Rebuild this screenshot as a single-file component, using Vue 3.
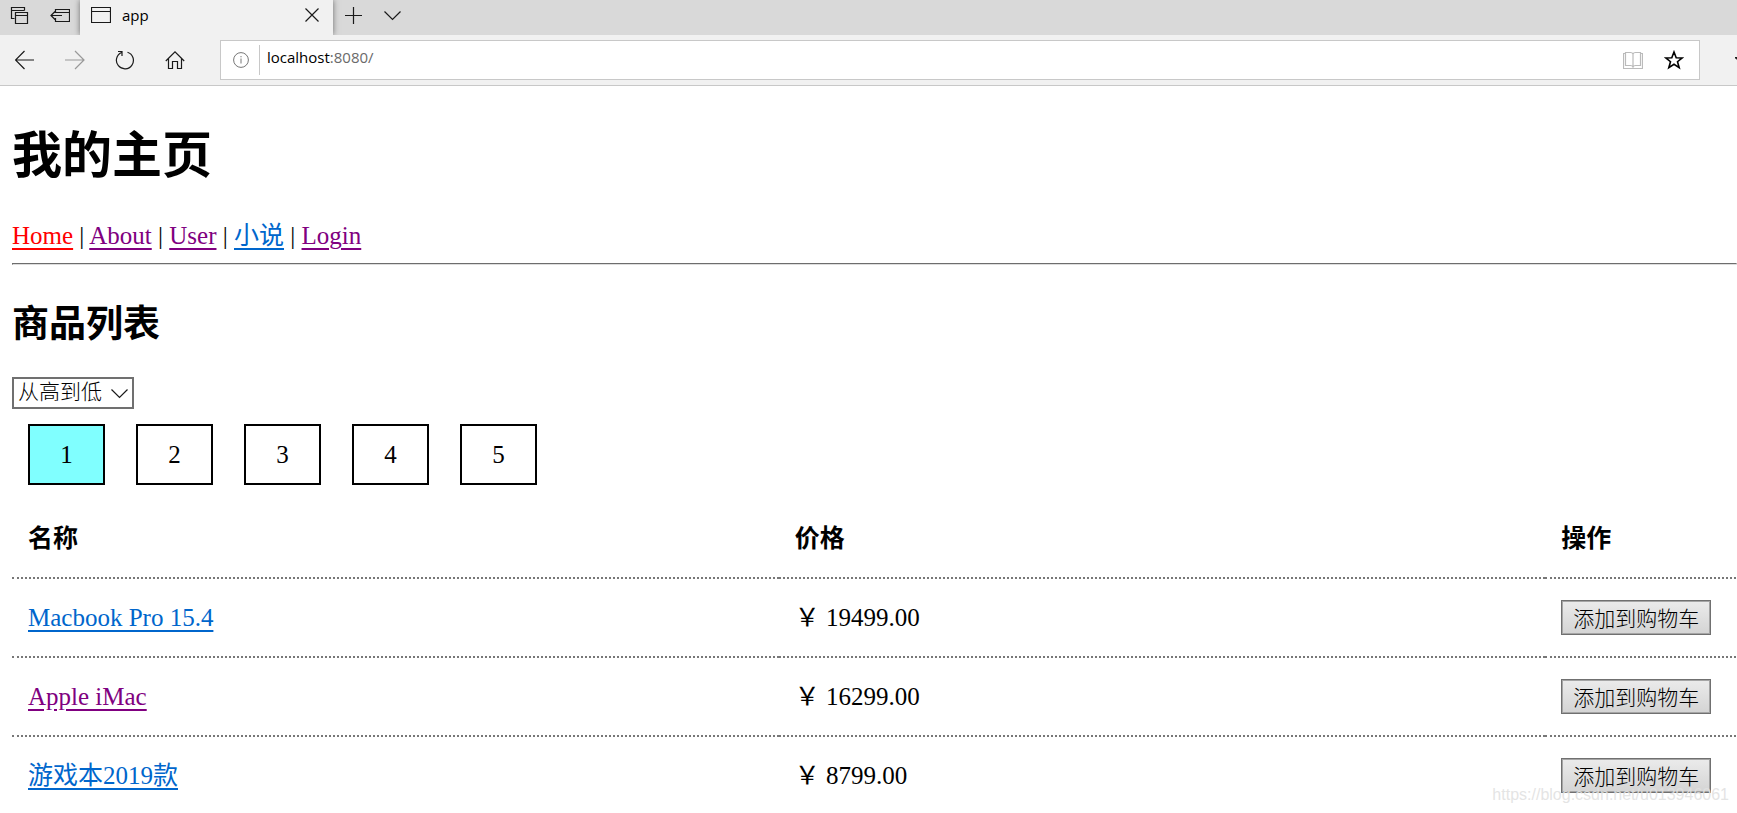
<template>
  <div class="window">
    <header class="tab-strip">
      <button class="strip-btn" type="button" aria-label="Tabs set aside">
        <svg width="20" height="20" viewBox="0 0 20 20">
          <path d="M4.5 12.5h-3v-11h13v3M1.5 4.5h13M5.5 6.5h12v11h-12zM5.5 9.5h12" />
        </svg>
      </button>
      <button class="strip-btn aside-btn" type="button" aria-label="Set tabs aside">
        <svg width="20" height="20" viewBox="0 0 20 20">
          <path d="M5.5 7V3.5h14v12h-14V12M5.5 6.5h14M1 9.5h11M5 5.5l-4 4 4 4" />
        </svg>
      </button>
      <div class="tab">
        <svg width="20" height="18" viewBox="0 0 20 18">
          <path d="M.5 1.5h19v15H.5zM.5 5.5h19" />
        </svg>
        <span class="tab-title">app</span>
        <button type="button" aria-label="Close tab">
          <svg width="14" height="14" viewBox="0 0 14 14"><path d="M.5.5l13 13M13.5.5l-13 13" /></svg>
        </button>
      </div>
      <button class="strip-btn plus-btn" type="button" aria-label="New tab">
        <svg width="17" height="17" viewBox="0 0 17 17"><path d="M0 8.5h17M8.5 0v17" /></svg>
      </button>
      <button class="strip-btn" type="button" aria-label="Tab previews">
        <svg width="17" height="10" viewBox="0 0 17 10"><path d="M.5.5l8 8 8-8" /></svg>
      </button>
    </header>

    <div class="toolbar">
      <button type="button" aria-label="Back">
        <svg width="20" height="20" viewBox="0 0 20 20"><path d="M.7 10H19M9.5 1l-9 9 9 9" /></svg>
      </button>
      <button class="disabled" type="button" aria-label="Forward" disabled>
        <svg width="20" height="20" viewBox="0 0 20 20"><path d="M0 10h19M10 1l9 9-9 9" /></svg>
      </button>
      <button type="button" aria-label="Refresh">
        <svg width="20" height="20" viewBox="0 0 20 20">
          <path d="M12.5 2.2A8.5 8.5 0 1 1 6.5 2.5M3 1.5h4v4.5" />
        </svg>
      </button>
      <button type="button" aria-label="Home">
        <svg width="20" height="20" viewBox="0 0 20 20">
          <path d="M.8 11L10 1.8 19.2 11M3.5 8.5v10h4v-7h5v7h4v-10" />
        </svg>
      </button>
      <div class="address">
        <svg class="info" width="16" height="16" viewBox="0 0 16 16">
          <circle cx="8" cy="8" r="7.4" />
          <path d="M8 6.5v5M8 4v1.3" />
        </svg>
        <div class="url"><b>localhost</b>:8080/</div>
        <button class="book" type="button" aria-label="Reading view">
          <svg width="20" height="19" viewBox="0 0 20 19">
            <path d="M2.5 2.5h-2v15h19v-15h-2M2.5 1.5h5q2 0 2.5 1.5.5-1.5 2.5-1.5h5v13h-5q-2 0-2.5 1.5-.5-1.5-2.5-1.5h-5zM10 3v13" />
          </svg>
        </button>
        <button type="button" aria-label="Add to favorites">
          <svg width="20" height="20" viewBox="0 0 20 20">
            <path class="star" d="M10 2l2.2 5.7 6 .2-4.7 3.800 1.700 6L10 14.300l-5.200 3.400 1.700-6L1.800 7.900l6-.2z" />
          </svg>
        </button>
      </div>
      <svg class="hub" width="20" height="20" viewBox="0 0 20 20">
        <path d="M0 7.5h7L10 1l3 6.5h7M0 7.5l5 4" />
      </svg>
    </div>

    <main class="page">
      <h1>我的主页</h1>
      <nav>
        <template v-for="(link, i) in links" :key="link.text">
          <span v-if="i > 0"> | </span>
          <a :href="link.href" :class="link.state">{{ link.text }}</a>
        </template>
      </nav>
      <hr />
      <h2>商品列表</h2>
      <div class="sort">
        <select v-model="order" aria-label="价格排序">
          <option value="desc">从高到低</option>
        </select>
        <svg width="17" height="10" viewBox="0 0 17 10"><path d="M.5.5l8 8 8-8" /></svg>
      </div>
      <div class="pager">
        <button
          v-for="n in 5"
          :key="n"
          type="button"
          :class="{ active: n === current }"
          @click="current = n"
        >{{ n }}</button>
      </div>
      <table>
        <thead>
          <tr>
            <th>名称</th>
            <th>价格</th>
            <th>操作</th>
          </tr>
        </thead>
        <tbody>
          <tr v-for="item in products" :key="item.id">
            <td><a :href="'/detail/' + item.id" :class="{ visited: item.visited }">{{ item.name }}</a></td>
            <td>￥ {{ item.price.toFixed(2) }}</td>
            <td><button class="cart" type="button">添加到购物车</button></td>
          </tr>
        </tbody>
      </table>
    </main>
    <div class="watermark">https://blog.csdn.net/u013946061</div>
  </div>
</template>

<script setup>
import { ref } from 'vue'

const order = ref('desc')
const current = ref(1)

const links = [
  { text: 'Home', href: '/', state: 'current' },
  { text: 'About', href: '/about', state: 'visited' },
  { text: 'User', href: '/user', state: 'visited' },
  { text: '小说', href: '/novel', state: '' },
  { text: 'Login', href: '/login', state: 'visited' }
]

const products = [
  { id: 1, name: 'Macbook Pro 15.4', price: 19499, visited: false },
  { id: 2, name: 'Apple iMac', price: 16299, visited: true },
  { id: 3, name: '游戏本2019款', price: 8799, visited: false }
]
</script>

<style>
body {
  margin: 0;
  background: #fff;
}
</style>

<style scoped>
.window {
  position: relative;
  height: 100vh;
  overflow: hidden;
  color: #000;
  font-family: 'Liberation Serif', 'Noto Sans CJK SC', serif;
  font-size: 25px;
}

button {
  font: inherit;
  color: inherit;
  padding: 0;
  border: 0;
  background: none;
}

svg {
  display: block;
  flex: none;
  fill: none;
  stroke: #1a1a1a;
  stroke-width: 1.2;
}

/* browser frame */
.tab-strip {
  display: flex;
  align-items: center;
  height: 35px;
  padding-left: 10px;
  background: #d9d9d9;
  font-family: 'Open Sans', 'Noto Sans CJK SC', sans-serif;
  font-size: 15px;
}

.strip-btn {
  height: 30px;
  margin-right: 20px;
  padding-bottom: 4px;
}

.aside-btn {
  margin-right: 10px;
}

.plus-btn {
  margin-right: 22px;
  margin-left: 12px;
}

.tab {
  display: flex;
  align-items: center;
  box-sizing: border-box;
  width: 253px;
  height: 35px;
  padding: 0 14px 6px 11px;
  background: #f1f1f1;
  box-shadow: 0 0 6px rgba(0, 0, 0, 0.5);
}

.tab-title {
  flex: 1;
  margin-left: 11px;
}

.toolbar {
  position: relative;
  display: flex;
  align-items: center;
  gap: 30px;
  box-sizing: border-box;
  height: 51px;
  padding-left: 15px;
  border-bottom: 1px solid #c8c8c8;
  background: #f1f1f1;
  overflow: hidden;
}

.disabled svg {
  stroke: #999;
}

.address {
  display: flex;
  flex: 1;
  align-items: center;
  box-sizing: border-box;
  height: 40px;
  margin-left: 5px;
  padding: 0 15px 0 12px;
  border: 1px solid #c8c8c8;
  background: #fff;
}

.info {
  stroke: #777;
  stroke-width: 1;
}

.url {
  flex: 1;
  height: 30px;
  margin-left: 10px;
  padding-left: 7px;
  border-left: 1px solid #c8c8c8;
  color: #6a6a6a;
  font-family: 'Open Sans', 'Noto Sans CJK SC', sans-serif;
  font-size: 15px;
  line-height: 25px;
}

.url b {
  color: #000;
  font-weight: 400;
}

.book {
  margin-right: 21px;
}

.book svg {
  stroke: #bbb;
}

.star {
  stroke: #000;
  stroke-width: 1.6;
}

.hub {
  margin: 0 -18px 0 5px;
}

/* page */
.page {
  padding: 40px 0 0 12px;
}

h1 {
  margin: 0 0 33px;
  font-size: 50px;
  line-height: 60px;
}

nav {
  line-height: 34px;
}

a {
  color: #0066cc;
  text-decoration: underline;
  text-decoration-thickness: 2px;
  text-underline-offset: 4px;
}

.visited {
  color: #800080;
}

.current {
  color: #f00;
}

hr {
  height: 0;
  margin: 10px 0 35px;
  border: 1px solid;
  border-color: #6d6d6d #ddd #ddd #6d6d6d;
}

h2 {
  margin: 0 0 27px;
  font-size: 37px;
  line-height: 50px;
}

.sort {
  position: relative;
  width: 122px;
}

.sort select {
  display: block;
  width: 100%;
  height: 32px;
  padding: 0 0 2px 4px;
  border: 2px solid #707070;
  border-radius: 0;
  appearance: none;
  background: #fff;
  color: #000;
  font-family: 'Liberation Serif', 'Noto Sans CJK SC', sans-serif;
  font-size: 21px;
  font-weight: 300;
  line-height: 26px;
}

.sort svg {
  position: absolute;
  top: 12px;
  right: 6px;
  pointer-events: none;
}

.pager {
  display: flex;
  gap: 31px;
  margin: 15px 16px;
}

.pager button {
  width: 77px;
  height: 61px;
  border: 2px solid #000;
}

.pager .active {
  background: #80ffff;
}

table {
  width: calc(100% * 4 / 3);
  table-layout: fixed;
  border-collapse: separate;
  border-spacing: 0;
}

th,
td {
  box-sizing: border-box;
  height: 79px;
  padding: 0 16px;
  border-bottom: 2px dotted #777;
  line-height: 28px;
  text-align: left;
}

.cart {
  display: block;
  height: 35px;
  padding: 0 11px;
  border: 1px solid #707070;
  box-shadow: inset 0 0 0 1px #a5a5a5;
  background: linear-gradient(#ebebeb, #d4d4d4);
  font-family: 'Noto Sans CJK SC', sans-serif;
  font-size: 21px;
  font-weight: 300;
  line-height: 31px;
}

.watermark {
  position: absolute;
  right: 8px;
  bottom: 8px;
  color: rgba(225, 225, 225, 0.9);
  font-family: 'Liberation Sans', 'Noto Sans CJK SC', sans-serif;
  font-size: 16px;
  line-height: 20px;
}
</style>
